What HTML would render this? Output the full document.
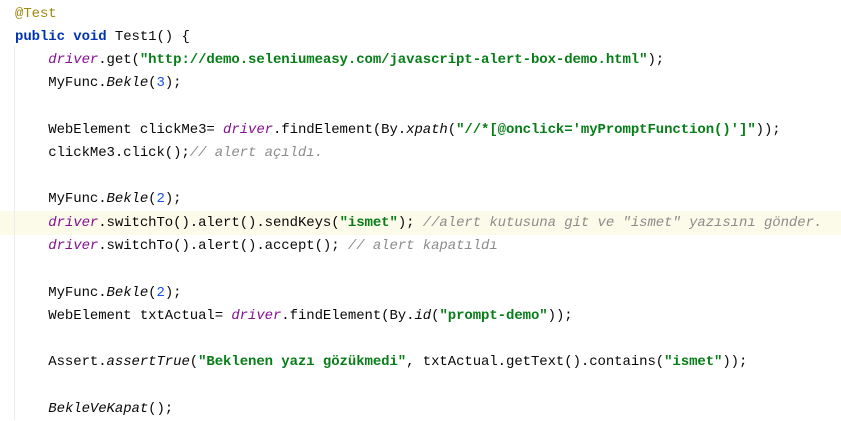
<!DOCTYPE html><html><head><style>
body{margin:0;width:841px;height:420px;background:#fff;overflow:hidden;position:relative;font-family:"Liberation Mono",monospace;font-size:14px;letter-spacing:-0.08px;color:#080808}
.l{position:absolute;left:15px;white-space:pre;line-height:23px;height:23px}
.hl{position:absolute;left:0;width:841px;top:211px;height:24px;background:#fcfae9}
.k{color:#0033b3;font-weight:bold}.d{color:#871094;font-style:italic}.s{color:#067d17;font-weight:bold}.n{color:#1750eb}.c{color:#8c8c8c;font-style:italic}.a{color:#9e880d}.i{font-style:italic}
.vl{position:absolute;left:14px;top:46px;width:1px;height:374px;background:#ececec}
</style></head><body>
<div class="hl"></div><div class="vl"></div>
<div class="l" style="top:3px"><span class="a">@Test</span></div>
<div class="l" style="top:26px"><span class="k">public void</span> Test1() {</div>
<div class="l" style="top:49px">    <span class="d">driver</span>.get(<span class="s">"http://demo.seleniumeasy.com/javascript-alert-box-demo.html"</span>);</div>
<div class="l" style="top:72px">    MyFunc.<span class="i">Bekle</span>(<span class="n">3</span>);</div>
<div class="l" style="top:119px">    WebElement clickMe3= <span class="d">driver</span>.findElement(By.<span class="i">xpath</span>(<span class="s">"//*[@onclick='myPromptFunction()']"</span>));</div>
<div class="l" style="top:142px">    clickMe3.click();<span class="c">// alert açıldı.</span></div>
<div class="l" style="top:188px">    MyFunc.<span class="i">Bekle</span>(<span class="n">2</span>);</div>
<div class="l" style="top:212px">    <span class="d">driver</span>.switchTo().alert().sendKeys(<span class="s">"ismet"</span>); <span class="c">//alert kutusuna git ve "ismet" yazısını gönder.</span></div>
<div class="l" style="top:235px">    <span class="d">driver</span>.switchTo().alert().accept(); <span class="c">// alert kapatıldı</span></div>
<div class="l" style="top:282px">    MyFunc.<span class="i">Bekle</span>(<span class="n">2</span>);</div>
<div class="l" style="top:305px">    WebElement txtActual= <span class="d">driver</span>.findElement(By.<span class="i">id</span>(<span class="s">"prompt-demo"</span>));</div>
<div class="l" style="top:351px">    Assert.<span class="i">assertTrue</span>(<span class="s">"Beklenen yazı gözükmedi"</span>, txtActual.getText().contains(<span class="s">"ismet"</span>));</div>
<div class="l" style="top:398px">    <span class="i">BekleVeKapat</span>();</div>
</body></html>
